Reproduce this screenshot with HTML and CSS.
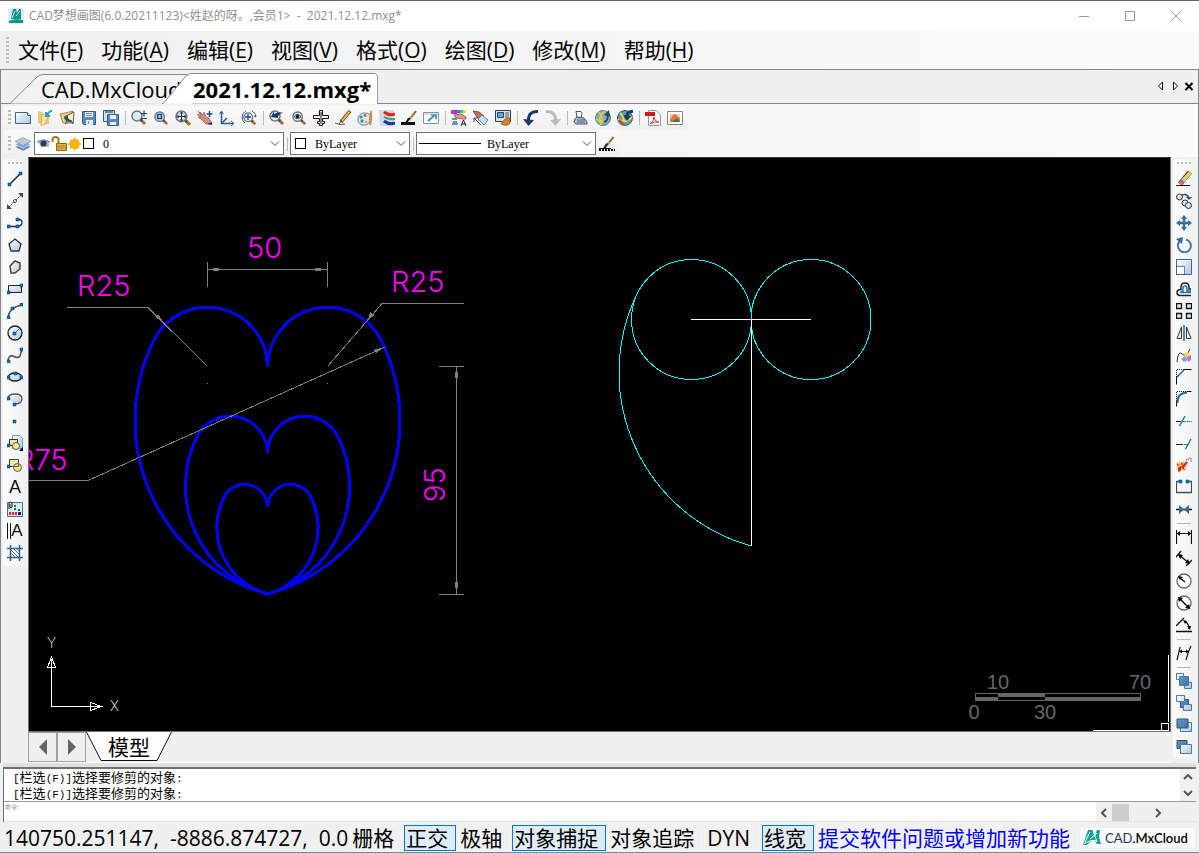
FILE: index.html
```html
<!DOCTYPE html>
<html lang="zh-CN">
<head>
<meta charset="utf-8">
<title>CAD梦想画图</title>
<link rel="stylesheet" href="styles.css">
</head>
<body>
<svg class="defs" aria-hidden="true">
  <defs>
    <linearGradient id="glass" x1="0" y1="0" x2="1" y2="1"><stop offset="0" stop-color="#fff"/><stop offset="1" stop-color="#a9c6de"/></linearGradient>
    <linearGradient id="steel" x1="0" y1="0" x2="1" y2="1"><stop offset="0" stop-color="#6b9ac6"/><stop offset="1" stop-color="#3f6fa3"/></linearGradient>
    <symbol id="lens" viewBox="0 0 16 16"><path d="M10 10l4 4" stroke="#b0692a" stroke-width="3"/><path d="M9.500 9.500l1.500 1.500" stroke="#444" stroke-width="2.500"/><circle cx="6" cy="6" r="5" fill="#dcebf5" stroke="#6d7580" stroke-width="1.500"/></symbol>
    <symbol id="brush" viewBox="0 0 16 16"><path d="M15 1L9.500 8" stroke="#a45f2b" stroke-width="2"/><path d="M10.500 6.500L8 10" stroke="#aaa" stroke-width="3"/><path d="M9.500 8L6 13.500 4 13l3-5z" fill="#151515"/></symbol>
    <symbol id="mark" viewBox="0 0 18 16"><path fill="#12a594" d="M5 0h5l1 7 3-7h3l-1 7 2 7h-4l-3-4-4 2-3 3H0z"/><path d="M2 12l5-10M7 9l7-6M1 14Q8 9 14 11M10 0l4 12" stroke="#fff" fill="none"/></symbol>
  </defs>
</svg>
<div class="app">
  <header class="titlebar">
    <svg class="logo" viewBox="0 0 16 16"><rect width="16" height="16" rx="2" fill="#dceceb"/><path fill="#07978a" d="M5 1h3l1 4 2-4h2v10H3zM1 13c5-2 8-2 14-1v3H1z"/><path d="M4 10l3-7M8 8l4-5" stroke="#c9e8e3" fill="none"/></svg>
    <h1>CAD梦想画图(6.0.20211123)&lt;姓赵的呀。,会员1&gt;&nbsp; -&nbsp; 2021.12.12.mxg*</h1>
    <div class="winbtns">
      <button aria-label="最小化"><svg viewBox="0 0 12 12"><path d="M1 6.500h10"/></svg></button>
      <button aria-label="最大化"><svg viewBox="0 0 12 12"><path d="M1.500 1.500h9v9h-9z"/></svg></button>
      <button aria-label="关闭"><svg viewBox="0 0 12 12"><path d="M1 1l10 10M11 1L1 11"/></svg></button>
    </div>
  </header>
  <nav class="menubar">
    <span class="grip"></span>
    <button>文件(<u>F</u>)</button><button>功能(<u>A</u>)</button><button>编辑(<u>E</u>)</button><button>视图(<u>V</u>)</button><button>格式(<u>O</u>)</button><button>绘图(<u>D</u>)</button><button>修改(<u>M</u>)</button><button>帮助(<u>H</u>)</button>
  </nav>
  <div class="tabs">
    <button class="tab"><svg viewBox="0 0 184 31" preserveAspectRatio="none"><path d="M0 30.500L27 4Q30 1.500 33 1.500H176L183 5V31" fill="#f2f2f2"/></svg><span>CAD.MxCloud</span></button>
    <button class="tab active"><svg viewBox="0 0 218 31" preserveAspectRatio="none"><path d="M0 30.500H1Q4 28 6 25L24 3Q27 .5 30 .5H215L217.500 3V31" fill="#fff"/></svg><span>2021.12.12.mxg*</span></button>
    <div class="tabnav">
      <button aria-label="上一个"><svg viewBox="0 0 12 12"><path d="M7.500 2v8l-4-4z" fill="#fff"/></svg></button>
      <button aria-label="下一个"><svg viewBox="0 0 12 12"><path d="M4.500 2v8l4-4z" fill="#fff"/></svg></button>
      <button aria-label="关闭"><svg viewBox="0 0 12 12"><path d="M2.500 3l7 7M9.500 3l-7 7" stroke-width="2"/></svg></button>
    </div>
  </div>

  <div class="bars">
    <div class="toolbar">
      <span class="grip"></span>
      <button aria-label="新建"><svg viewBox="0 0 16 16"><path d="M.5 2.500h12l3 3v8H.5z" fill="url(#glass)" stroke="#42657f"/><path d="M12.500 2.500v3h3" fill="#fff" stroke="#42657f"/></svg></button>
      <button aria-label="打开"><svg viewBox="0 0 16 16"><path d="M1 1l4 1 1 2h6v10l-6 1-5-2z" fill="#e9c877"/><path d="M5 4l7 1-4 9-4 2z" fill="#f6e0a0" stroke="#c99f49" stroke-width=".6"/><path d="M15 1q-3 0-5 4M9 2v4h4" stroke="#2e9ad2" stroke-width="2" fill="none"/></svg></button>
      <button aria-label="打开云图"><svg viewBox="0 0 16 16"><path d="M1 4l5-1 8-2-2 3 2 9H4z" fill="#edd27e" stroke="#92713a" stroke-width=".8"/><path d="M15 2L5 7l4 2-3 5 6-4 2 4z" fill="#fff3bd" stroke="#5b5a4c"/><path d="M5 8l4-3v3l5 5-7-2z" fill="#2f4e75"/></svg></button>
      <button aria-label="保存"><svg viewBox="0 0 16 16"><path d="M1.500 1.500h13v13h-12l-1-1z" fill="#5c89b9" stroke="#355d8b"/><path d="M4 2h8v5H4zM5 10h7v5H5z" fill="#e3edf5"/><path d="M5 3.500h6M5 5.500h6M7.500 11v3" stroke="#6d8eae"/></svg></button>
      <button aria-label="全部保存"><svg viewBox="0 0 16 16"><path d="M.5.5h11v11H.5z" fill="#d4e2ef" stroke="#355d8b"/><path d="M2 2h8" stroke="#5c89b9" stroke-width="2"/><path d="M4.500 4.500h11v11h-11z" fill="#5c89b9" stroke="#355d8b"/><path d="M7 5h6v4H7zM7 12h6v3H7z" fill="#e9f1f7"/></svg></button>
      <i class="sep"></i>
      <button aria-label="实时缩放"><svg viewBox="0 0 16 16"><use href="#lens" width="16" height="16"/><path d="M10 3.500h6M13 .5v6M10 8.500h6" stroke="#24415f" stroke-width="1.200"/></svg></button>
      <button aria-label="窗口缩放"><svg viewBox="0 0 16 16"><use href="#lens" x="1" y="1" width="15" height="15"/><path d="M4.500 4.500h4v4h-4z" fill="#b9d4ea" stroke="#164c80" stroke-width="1.500"/></svg></button>
      <button aria-label="范围缩放"><svg viewBox="0 0 16 16"><use href="#lens" width="17" height="17"/><path d="M2.500 6.500h8M6.500 2.500v8" stroke="#153047"/><path d="M1.500 6.500l2-2v4zM11.500 6.500l-2-2v4zM6.500 1.500l-2 2h4zM6.500 11.500l-2-2h4z" fill="#153047"/></svg></button>
      <button aria-label="平移"><svg viewBox="0 0 16 16"><path d="M1 1l4 4L3 2l3 3 1-3 2 5 3 1 3 6H9L4 9 1 7l3 .5L0 4l4 2z" fill="#d08a80" stroke="#a6655b" stroke-width=".8"/><path d="M10 14l5-2v3z" fill="#203a60"/><path d="M9.500 4h6M12.500 1v6" stroke="#214a77" stroke-width="1.500"/></svg></button>
      <button aria-label="坐标"><svg viewBox="0 0 16 16"><path d="M2.500 2v11.500H14M2.500 13.500L8 8" stroke="#2b618d" fill="none" stroke-width="1.500"/><path d="M.5 4l2-3 2 3M12 11l3 2.500-3 2.500" stroke="#2b618d" fill="none"/></svg></button>
      <button aria-label="重生成"><svg viewBox="0 0 16 16"><use href="#lens" x="2" y="2" width="14" height="14"/><path d="M7 4v6M4 7h6" stroke="#27527e" stroke-width="1.300"/><path d="M5 1Q1 3 1 7q0 4 3 6M11 1q4 2 4 6l-2-1" fill="none" stroke="#315e89"/></svg></button>
      <i class="sep"></i>
      <button aria-label="缩放上一个"><svg viewBox="0 0 16 16"><use href="#lens" width="16" height="16"/><path d="M2 7l3-6v3q5-3 9-1-3 0-5 3v2z" fill="#1d3964"/></svg></button>
      <button aria-label="动态观察"><svg viewBox="0 0 16 16"><use href="#lens" x="1" y="1" width="15" height="15"/><path d="M3 6.500q3.500-4 7 0-3.500 4-7 0" fill="#fff" stroke="#333"/><circle cx="6.500" cy="6.500" r="1.700" fill="#111"/></svg></button>
      <button aria-label="测量"><svg viewBox="0 0 16 16"><path d="M6.500.5h3v5h6v3h-6v3h2v2h-2v2h-3v-2h-2v-2h2v-3h-6v-3h6z" fill="#fff" stroke="#111"/><path d="M8 2v12" stroke="#111"/></svg></button>
      <button aria-label="画笔"><svg viewBox="0 0 16 16"><path d="M15 1L6 12" stroke="#5c3c1e" stroke-width="3.500"/><path d="M14.500 1.500L7 11" stroke="#f2c34e" stroke-width="2"/><path d="M7 10l-3 4M0 13l5 1.500 5-.5" stroke="#555" fill="none"/></svg></button>
      <button aria-label="颜色"><svg viewBox="0 0 16 16"><path d="M1 8q1-5 7-5 6 0 5 4-1 2 0 4-2 5-8 4-5-2-4-7z" fill="#d9e9f1" stroke="#61899d"/><circle cx="4" cy="7" r="1.500" fill="#369c5b"/><circle cx="8" cy="5.500" r="1.500" fill="#e8503a"/><circle cx="5" cy="11" r="1.700" fill="#3e87c9"/><circle cx="9" cy="12" r="1.300" fill="#e7b72e"/><path d="M14 1v10l-1 4" stroke="#e38830" stroke-width="2"/></svg></button>
      <button aria-label="图层颜色"><svg viewBox="0 0 16 16"><path d="M0 0h15v16H1z" fill="#cfd8e5"/><path d="M5 2q5 4 11 2" stroke="#ee1b24" stroke-width="3" fill="none"/><path d="M5 7q5 3 11 2" stroke="#29a94c" stroke-width="2" fill="none"/><path d="M5 11q5 4 11 2" stroke="#242eae" stroke-width="3" fill="none"/></svg></button>
      <button aria-label="线宽"><svg viewBox="0 0 16 16"><use href="#brush" width="16" height="16"/><path d="M0 13.500h14" stroke="#111" stroke-width="3"/></svg></button>
      <button aria-label="全屏"><svg viewBox="0 0 16 16"><path d="M.5 2.500h15v11H.5z" fill="#fff" stroke="#8a9199"/><path d="M1 4h14" stroke="#dbe1e6" stroke-width="2"/><path d="M5 11l7-6M8 5h5v4" fill="none" stroke="#2995d2" stroke-width="1.700"/></svg></button>
      <i class="sep"></i>
      <button aria-label="特性"><svg viewBox="0 0 16 16"><path d="M0 0h3v4H0z" fill="#ef26a8"/><path d="M3 0h3v4H3z" fill="#9e39df"/><path d="M6 0h3v3H6z" fill="#267fe8"/><path d="M9 0h3v3H9z" fill="#25cf77"/><path d="M12 0h3v3h-3z" fill="#f5dc28"/><path d="M3 5l7-1 5 3v2h-4L5 8z" fill="#da9d8d" stroke="#8e5148" stroke-width=".8"/><path d="M1 8h5v2H1zM2 11h4v2H2zM1 13h6v2H1z" fill="#6a8fb8"/><path d="M10 16l2.500-6 2.500 6m-4.500-2h4" stroke="#222" fill="none"/></svg></button>
      <button aria-label="特性匹配"><svg viewBox="0 0 16 16"><path d="M0 1l6 1 5 4-4 4-3-3z" fill="#b7776d" stroke="#805149"/><path d="M9 5l6 5-4 5-6-6z" fill="#cae0ee" stroke="#5e829c"/><path d="M1 8l7 7M1 12V8h4" stroke="#444" fill="none"/></svg></button>
      <button aria-label="绘图设置"><svg viewBox="0 0 16 16"><path d="M.5.5h15v11H.5z" fill="#d9e1e7" stroke="#303c48"/><path d="M2.500 2.500h6v5h-6z" fill="#6e9fd2" stroke="#1f4776"/><path d="M10 3h4M10 5h4M10 7h4" stroke="#53616e"/><path d="M15 8l-5 1-4 5q7 3 9-1z" fill="#d98321" stroke="#88511b" stroke-width=".7"/></svg></button>
      <i class="sep"></i>
      <button aria-label="撤销"><svg viewBox="0 0 16 16"><path d="M15 1.500Q5 1 5.500 11" fill="none" stroke="#1c3b6c" stroke-width="3"/><path d="M0 9l5.500 7L11 10z" fill="#1c3b6c"/></svg></button>
      <button aria-label="重做"><svg viewBox="0 0 16 16"><path d="M1 1.500q10-.5 9.500 9.500" fill="none" stroke="#b9bbbd" stroke-width="3"/><path d="M16 9l-5.500 7L5 10z" fill="#b9bbbd"/></svg></button>
      <i class="sep"></i>
      <button aria-label="打印"><svg viewBox="0 0 16 16"><path d="M3 1.500h5l1 2-1 4H4z" fill="#fff" stroke="#43546b"/><path d="M2 9l2-2 7 1 3 4v2H3l-2-2z" fill="#b4c1d2" stroke="#3e5069"/><path d="M4 10h8M4 12h8" stroke="#47627f"/></svg></button>
      <button aria-label="上传云图"><svg viewBox="0 0 16 16"><circle cx="8" cy="8" r="7.500" fill="#7cacbf" stroke="#5c7b8d"/><path d="M1 9q7 5 14-3M4 2q5 7 2 12M10 1q-8 6-4 14" stroke="#e8c447" fill="none" stroke-width="1.700"/><path d="M9 5l5-5 1 7z" fill="#1d4779"/><path d="M9 12q4-1 4-7" stroke="#1d4779" fill="none" stroke-width="2"/></svg></button>
      <button aria-label="下载云图"><svg viewBox="0 0 16 16"><circle cx="8" cy="8" r="7.500" fill="#5e9ab2" stroke="#365b70"/><path d="M1 9q7 5 14-2M3 3q5 4 3 11" stroke="#f0d34d" fill="none" stroke-width="2"/><path d="M2 10l5 4" stroke="#d6442d" stroke-width="2"/><path d="M16 1.500Q10 1 10 6" stroke="#173965" fill="none" stroke-width="3"/><path d="M6 5l4 6 4-5z" fill="#173965"/></svg></button>
      <i class="sep"></i>
      <button aria-label="输出PDF"><svg viewBox="0 0 16 16"><path d="M3.500.5h8l4 4v11h-12z" fill="#fff" stroke="#999"/><path d="M0 2h10v4H0z" fill="#d61921"/><path d="M5 14q4-3 4-7 1 5 5 5-5-1-9 2" stroke="#df2933" fill="none"/></svg></button>
      <button aria-label="输出图片"><svg viewBox="0 0 16 16"><path d="M.5 1.500h15v13H.5z" fill="#fff" stroke="#888"/><path d="M3 4h10v8H3z" fill="#f5c69a"/><path d="M3 9l4-5h6v8H3z" fill="#df7448"/><path d="M8 4h5v4z" fill="#f4dfae"/><path d="M5 12l5-4 3 4z" fill="#48782f"/></svg></button>
    </div>
    <div class="toolbar second">
      <span class="grip"></span>
      <button aria-label="图层管理"><svg viewBox="0 0 16 16"><path d="M0 11l8-4 8 4-8 4z" fill="#527fae" stroke="#fff" stroke-width=".5"/><path d="M0 8.500l8-4 8 4-8 4z" fill="#88a9c9" stroke="#fff" stroke-width=".5"/><path d="M0 5.500l8-4 8 4-8 4z" fill="#b7cbdd" stroke="#5480a7" stroke-width=".5"/></svg></button>
      <div class="combo layer">
        <span class="comboicons">
          <svg viewBox="0 0 13 14"><path d="M1 5q6-5 11 0v5H4z" fill="#a9b7c4"/><circle cx="6.500" cy="6.500" r="3" fill="#263e5a"/><path d="M0 5q6-4 13 0" stroke="#5e6d7c" fill="none"/></svg>
          <svg class="lock" viewBox="0 0 16 15"><path d="M1.500 6V3.500Q2 1 4.500 1 7.500 1 7.500 4v4" fill="none" stroke="#a87c1c" stroke-width="2"/><path d="M5.500 7.500h10v7h-10z" fill="#e5b646" stroke="#8b681a"/><path d="M6 10h9M6 12h9" stroke="#a88228"/></svg>
          <svg viewBox="0 0 13 13"><path d="M6.500 0v13M0 6.500h13M2 2l9 9M11 2l-9 9" stroke="#f6b500" stroke-width="1.500"/><circle cx="6.500" cy="6.500" r="4.500" fill="#ffb900" stroke="#f79b00"/></svg>
          <i class="swatch"></i>
        </span>
        <select aria-label="图层"><option>0</option></select>
        <svg class="chev" viewBox="0 0 10 6"><path d="M1 .5l4 4 4-4"/></svg>
      </div>
      <i class="sep"></i>
      <div class="combo color">
        <span class="comboicons"><i class="swatch"></i></span>
        <select aria-label="颜色"><option>ByLayer</option></select>
        <svg class="chev" viewBox="0 0 10 6"><path d="M1 .5l4 4 4-4"/></svg>
      </div>
      <i class="sep"></i>
      <div class="combo line">
        <span class="comboicons"><i class="rule"></i></span>
        <select aria-label="线型"><option>ByLayer</option></select>
        <svg class="chev" viewBox="0 0 10 6"><path d="M1 .5l4 4 4-4"/></svg>
      </div>
      <button aria-label="线型管理"><svg viewBox="0 0 16 16"><use href="#brush" width="16" height="15"/><path d="M0 12.500h12" stroke="#111"/><path d="M0 14h16" stroke="#111" stroke-width="2" stroke-dasharray="2 1"/></svg></button>
    </div>
  </div>

  <main class="work">
    <div class="side left">
      <span class="hgrip"></span>
      <button aria-label="直线"><svg viewBox="0 0 16 16"><path d="M3 13L13 3" stroke="#222" stroke-width="1.500"/><path class="n" d="M1 12h3v3H1zM12 1h3v3h-3z"/></svg></button>
      <button aria-label="构造线"><svg viewBox="0 0 16 16"><path d="M2 14L14 2" stroke="#444" stroke-dasharray="2 1"/><path d="M0 16v-5l5 5zM11 0h5v5z" fill="#444"/><circle cx="8" cy="8" r="1.500" fill="#fff" stroke="#444"/></svg></button>
      <button aria-label="多段线"><svg viewBox="0 0 16 16"><path d="M2 11.500h9M10 4.500h2q3 0 3 3t-4 4" fill="none" stroke="#333" stroke-width="1.300"/><path class="n" d="M0 10h3v3H0zM9 10h3v3H9zM9 3h3v3H9z"/></svg></button>
      <button aria-label="正多边形"><svg viewBox="0 0 16 16"><path d="M8 2l6 5-2 7H4L2 7z" fill="url(#glass)" stroke="#333" stroke-width="1.300"/></svg></button>
      <button aria-label="多边形"><svg viewBox="0 0 16 16"><path d="M8 2l5 2v6l-5 4H4L3 7z" fill="url(#glass)" stroke="#444" stroke-width="1.500"/></svg></button>
      <button aria-label="矩形"><svg viewBox="0 0 16 16"><path d="M1.500 4.500h13v7h-13z" fill="url(#glass)" stroke="#222"/><path class="n" d="M0 10h3v3H0zM13 3h3v3h-3z"/></svg></button>
      <button aria-label="圆弧"><svg viewBox="0 0 16 16"><path d="M1 15Q2 4 15 2" fill="none" stroke="#555" stroke-width="1.500"/><path class="n" d="M0 13h3v3H0zM4 4h3v3H4zM13 0h3v3h-3z"/></svg></button>
      <button aria-label="圆"><svg viewBox="0 0 16 16"><circle cx="8" cy="8" r="7" fill="url(#glass)" stroke="#222" stroke-width="1.300"/><path d="M8 8l5-5" stroke="#2476ba"/><path class="n" d="M6 7h3v3H6z"/></svg></button>
      <button aria-label="样条曲线"><svg viewBox="0 0 16 16"><path d="M1 15q0-7 5-6 5 3 7 0 1-3 2-7" fill="none" stroke="#555" stroke-width="1.500"/><path class="n" d="M0 13h3v3H0zM13 1h3v3h-3z"/></svg></button>
      <button aria-label="椭圆"><svg viewBox="0 0 16 16"><ellipse cx="8" cy="8" rx="6.500" ry="4" fill="url(#glass)" stroke="#222" stroke-width="1.300"/><path class="n" d="M0 7h3v3H0zM13 7h3v3h-3zM7 3h3v3H7z"/></svg></button>
      <button aria-label="椭圆弧"><svg viewBox="0 0 16 16"><path d="M1 8q0-5 7-5t7 5-7 5" fill="url(#glass)" stroke="#555" stroke-width="1.300"/><path class="n" d="M0 6h3v3H0zM6 12h3v3H6z"/></svg></button>
      <button aria-label="点"><svg viewBox="0 0 16 16"><path class="n" d="M6 7h3v3H6z"/></svg></button>
      <button aria-label="插入块"><svg viewBox="0 0 16 16"><path d="M5.500.5h7l3 3v10h-10z" fill="url(#glass)" stroke="#6f98bb"/><path d="M2.500 4.500h8v6h-8z" fill="#f4e79c" stroke="#333"/><circle cx="9" cy="11" r="3.500" fill="#f4e79c" stroke="#555"/><path class="n" d="M0 9h3v3H0z"/><path d="M12 16h4v-4z" fill="#000"/></svg></button>
      <button aria-label="创建块"><svg viewBox="0 0 16 16"><path d="M2.500 2.500h9v7h-9z" fill="#f7ea9e" stroke="#444"/><circle cx="10.500" cy="10.500" r="4" fill="#f4e37f" stroke="#555"/><path d="M7 9.500h4.500V7" fill="none" stroke="#555"/><path class="n" d="M0 8h3v3H0z"/></svg></button>
      <button aria-label="文字" class="glyph">A</button>
      <button aria-label="填充"><svg viewBox="0 0 16 16"><path d="M.5 1.500h15v14H.5z" fill="#dceaf5" stroke="#447199"/><path d="M2 11h2v3H2zM5 11h2v3H5zM8 11h2v3H8z" fill="#ef1e1e"/><path d="M7 4h2v2H7zM7 7h2v2H7zM11 8h2v2h-2z" fill="#187d35"/><path d="M11 11h3v3h-3z" fill="#15267d"/><path d="M2 8V2q1-2 3 0v4q-1 2-2 0V3" fill="none" stroke="#222"/></svg></button>
      <button aria-label="多行文字" class="glyph multi">A</button>
      <button aria-label="图案填充"><svg viewBox="0 0 16 16"><path d="M3.500 0v16M12.500 0v16M0 3.500h16M0 12.500h16" stroke="#2e658f" stroke-width="1.500"/><path d="M4 5l7 7M4 8l4 4M7 4l5 5M10 4l2 2" stroke="#537fa3"/></svg></button>
    </div>

    <div class="center">
      <div class="canvas">
        <svg class="drawing" viewBox="29 158 1141 573" preserveAspectRatio="xMinYMin meet" shape-rendering="crispEdges">
          <g fill="none" stroke="#00f" stroke-width="3">
            <path vector-effect="non-scaling-stroke" d="M267.500 366.500A60 60 0 0 0 154 340A180 180 0 0 0 267.500 594A180 180 0 0 0 381 340A60 60 0 0 0 267.500 366.500"/>
            <path vector-effect="non-scaling-stroke" transform="translate(267.500 594) scale(.62) translate(-267.500 -594)" d="M267.500 366.500A60 60 0 0 0 154 340A180 180 0 0 0 267.500 594A180 180 0 0 0 381 340A60 60 0 0 0 267.500 366.500"/>
            <path vector-effect="non-scaling-stroke" transform="translate(267.500 594) scale(.382) translate(-267.500 -594)" d="M267.500 366.500A60 60 0 0 0 154 340A180 180 0 0 0 267.500 594A180 180 0 0 0 381 340A60 60 0 0 0 267.500 366.500"/>
          </g>
          <g fill="none" stroke="#808080">
            <path d="M207.500 262v25M327.500 262v25M207 269.500h121M67 307.500h81l59.500 59M464 303.500h-82l-54.500 63M29 480.500h59L385 347M439 366.500h25M439 594.500h25M456.500 366v229M207 383.500h1M327 383.500h1"/>
          </g>
          <path d="M213 268h6v3h-6zM315 268h6v3h-6zM455 372h3v6h-3zM455 582h3v6h-3zM155 317l3-3 6 9zM368 320l2-8 5 3zM385 347l-9 6-3-3z" fill="#808080"/>
          <g class="dim">
            <text x="247" y="258">50</text><text x="77" y="296">R25</text><text x="391" y="292">R25</text><text x="16" y="470">R75</text>
            <text transform="translate(445 502) rotate(-90)">95</text>
          </g>
          <g fill="none" stroke="#0ff"><circle cx="691.500" cy="319.500" r="60"/><circle cx="811" cy="319.500" r="60"/><path d="M637.500 293A180 180 0 0 0 751.500 546"/></g>
          <path d="M691 319.500h120M751.500 320v226" stroke="#fff"/>
          <g fill="none" stroke="#fff"><path d="M51.500 668v38.500H91M51.500 657l-4 10.500h8zM51.500 659v8M101.500 706.500l-11-4v8zM91 706.500h10M1168.500 655v67M1161.500 723.500h7v7h-7zM1093 730.500h68"/></g>
          <g class="axis"><text x="47" y="648">Y</text><text x="110" y="711">X</text></g>
          <path d="M975.500 693.500h165v7h-165z" fill="none" stroke="#666"/>
          <path d="M975 697h23v4h-23zM998 693h47v4h-47zM1045 697h96v4h-96z" fill="#666"/>
          <g class="scale"><text x="998" y="689">10</text><text x="1140" y="689">70</text><text x="974" y="719">0</text><text x="1045" y="719">30</text></g>
        </svg>
      </div>
      <div class="sheets">
        <button class="arrow" aria-label="向左"><svg viewBox="0 0 16 16"><path d="M12 0v16L4 8z"/></svg></button>
        <button class="arrow" aria-label="向右"><svg viewBox="0 0 16 16"><path d="M4 0v16l8-8z"/></svg></button>
        <button class="sheet"><svg viewBox="0 0 86 29" preserveAspectRatio="none"><path d="M.5 0L15 28.500H71L85.500 0" fill="#fff" stroke="#111"/></svg><span>模型</span></button>
      </div>
    </div>

    <div class="side right">
      <span class="hgrip"></span>
      <button aria-label="删除"><svg viewBox="0 0 16 16"><path d="M0 14.500h14" stroke="#111"/><path d="M14 1L4 13" stroke="#333" stroke-width="5"/><path d="M14.500 1L8 8.500" stroke="#f0cf4b" stroke-width="3.500"/><path d="M9 7.500l-2 2.300" stroke="#b9d4e6" stroke-width="4"/><path d="M7 9.500L4 13" stroke="#e4685d" stroke-width="4"/></svg></button>
      <button aria-label="复制"><svg viewBox="0 0 16 16"><g fill="url(#glass)" stroke="#333"><circle cx="3.500" cy="4" r="3"/><circle cx="9" cy="10" r="3"/><circle cx="12.500" cy="12.500" r="3"/></g><path d="M6 2q6-2 7 4" fill="none" stroke="#245788" stroke-width="1.700"/><path d="M10 4h6l-3 3z" fill="#245788"/></svg></button>
      <button aria-label="移动"><svg viewBox="0 0 16 16"><path d="M8 2v12M2 8h12" stroke="#346d9f" stroke-width="2.500"/><path d="M8 0L5 4h6zM8 16l-3-4h6zM0 8l4-3v6zM16 8l-4-3v6z" fill="#346d9f"/></svg></button>
      <button aria-label="旋转"><svg viewBox="0 0 16 16"><path d="M4 4A6.500 6.500 0 1 0 10 2.500" fill="none" stroke="#4a779f" stroke-width="2"/><path d="M0 2l7-2-1 7z" fill="#346d9f"/></svg></button>
      <button aria-label="缩放"><svg viewBox="0 0 16 16"><path d="M.5.5h15v15H.5z" fill="url(#glass)" stroke="#326a98"/><path d="M.5 7.500h8v8h-8z" fill="#fff" stroke="#111" stroke-dasharray="1 1"/></svg></button>
      <button aria-label="偏移"><svg viewBox="0 0 16 16"><path d="M15 14.500H4q-3 0-3-3t4-3V6q0-4 4-4t4 4v2h2" fill="none" stroke="#222" stroke-width="1.500"/><path d="M15 11.500H5q-1-1 2-1V7q0-2 2-2t2 2v3h4" fill="none" stroke="#2674bd" stroke-width="1.500"/></svg></button>
      <button aria-label="阵列"><svg viewBox="0 0 16 16"><path d="M.5.500h5v5h-5zM10.500.5h5v5h-5zM.5 10.500h5v5h-5zM10.500 10.500h5v5h-5z" fill="#dbe8f3" stroke="#111" stroke-width="1.300"/></svg></button>
      <button aria-label="镜像"><svg viewBox="0 0 16 16"><path d="M5.500 2v11.500H1zM10.500 2v11.500H15z" fill="#eef4f8" stroke="#333"/><path d="M8 0v16" stroke="#1565ad" stroke-width="1.500"/></svg></button>
      <button aria-label="编辑样条"><svg viewBox="0 0 16 16"><path d="M1 15q1-12 5-8t8-5" fill="none" stroke="#333"/><path d="M10 5l4 2-2 4-4-2z" fill="#f3d744"/><path d="M11 10l4-2v5l-3 2z" fill="#c66bd0"/><path d="M5 12l4-3 3 4-4 2z" fill="#72a5e4"/></svg></button>
      <button aria-label="倒角"><svg viewBox="0 0 16 16"><path d="M.5 15.500V8M8 .5h7.500" stroke="#111"/><path d="M.5 8V.5H8" stroke="#111" stroke-dasharray="1 1" fill="none"/><path d="M1 8l7-7" stroke="#1766af" stroke-width="1.500"/></svg></button>
      <button aria-label="圆角"><svg viewBox="0 0 16 16"><path d="M.5 15.500V10M11 .5h4.500" stroke="#111"/><path d="M.5 10V.5H11" stroke="#111" stroke-dasharray="1 1" fill="none"/><path d="M1.500 12Q1 2 11 1.500" stroke="#1766af" stroke-width="2" fill="none"/></svg></button>
      <button aria-label="修剪"><svg viewBox="0 0 16 16"><path d="M0 8.500h5" stroke="#111"/><path d="M7 8.500h9" stroke="#2877b5" stroke-dasharray="3 1"/><path d="M3.500 13L9 3" stroke="#2877b5" stroke-width="1.500"/></svg></button>
      <button aria-label="延伸"><svg viewBox="0 0 16 16"><path d="M0 9.500h7" stroke="#111"/><path d="M8 9.500h4" stroke="#2877b5"/><path d="M9.500 14L15 4" stroke="#2877b5" stroke-width="1.500"/></svg></button>
      <button aria-label="分解"><svg viewBox="0 0 16 16"><path d="M0 6l2 1 1-3 2 3 3-3v4l3 1-3 2 1 3-3-1-3 3v-4H0l2-2z" fill="#f9b944"/><path d="M1 6l2 2-2 1zM5 5l2 2-2 1zM2 11l3-2v4l-3 2zM7 10l3 3-3-1z" fill="#e51c23"/><path d="M6 11l5-6" stroke="#d72c20" stroke-width="2.500"/><path d="M10 3l5-2v4" stroke="#888" stroke-dasharray="1 1" fill="none" stroke-width="2"/></svg></button>
      <button aria-label="打断"><svg viewBox="0 0 16 16"><path d="M4 2.500H.5v11h15v-11H12" fill="#f8fbfd" stroke="#45515b" stroke-width="1.300"/><path class="n" d="M3 1h3v3H3zM10 1h3v3h-3z"/></svg></button>
      <button aria-label="合并"><svg viewBox="0 0 16 16"><path d="M0 8.500h16" stroke="#111" stroke-width="1.500"/><path d="M3 4l5 4.500L3 13zM13 4L8 8.500l5 4.500z" fill="#39678c"/></svg></button>
      <i class="hsep"></i>
      <button aria-label="线性标注"><svg viewBox="0 0 16 16"><path d="M.5 1v14M15.500 1v14M1 4.500h14" stroke="#111" stroke-width="1.200"/><path d="M1 4.500l3-2.500v5zM15 4.500L12 2v5z" fill="#000"/></svg></button>
      <button aria-label="对齐标注"><svg viewBox="0 0 16 16"><path d="M3 4l10 8M0 6l5-6M10 15l6-6" stroke="#111" stroke-width="1.400"/><path d="M2 3l5 1-3 4zM14 13l-5-1 3-4z" fill="#000"/></svg></button>
      <button aria-label="半径标注"><svg viewBox="0 0 16 16"><circle cx="8" cy="8" r="7" fill="#fff" stroke="#666" stroke-width="1.300"/><path d="M3 4l6 5" stroke="#111" stroke-width="1.500"/><path d="M2 3l5 1-3 3z" fill="#000"/></svg></button>
      <button aria-label="直径标注"><svg viewBox="0 0 16 16"><circle cx="8" cy="8" r="7" fill="#fff" stroke="#666" stroke-width="1.300"/><path d="M3 3l10 10" stroke="#111" stroke-width="1.500"/><path d="M2 2l5 1-4 4zM14 14l-5-1 4-4z" fill="#000"/></svg></button>
      <button aria-label="角度标注"><svg viewBox="0 0 16 16"><path d="M0 14.500h16M0 9l8-8M9 4q4 3 4 8" fill="none" stroke="#111" stroke-width="1.300"/><path d="M7 3l4 1-2 3zM11 9h4l-1 4z" fill="#000"/></svg></button>
      <i class="hsep"></i>
      <button aria-label="编辑标注"><svg viewBox="0 0 16 16"><path d="M1 15Q3 7 4 2M10 15q2-8 5-14M3 6.500h10" fill="none" stroke="#111" stroke-width="1.200"/><path d="M3 6.500l3-2v4zM13 6.500l-3-2v4z" fill="#000"/></svg></button>
      <i class="hsep"></i>
      <button aria-label="前置"><svg viewBox="0 0 16 16"><g fill="url(#glass)" stroke="#477ca7"><path d="M.5.5h7v6h-7zM8.500 9.500h7v6h-7z"/><path d="M3.500 3.500h9v9h-9z" fill="url(#steel)"/></g></svg></button>
      <button aria-label="后置"><svg viewBox="0 0 16 16"><path d="M4.500 4.500h8v8h-8z" fill="url(#steel)" stroke="#28517c"/><path d="M.5.5h8v6h-8zM7.500 9.500h8v6h-8z" fill="url(#glass)" stroke="#477ca7"/></svg></button>
      <button aria-label="置于对象之上"><svg viewBox="0 0 16 16"><path d="M4.500 5.500h11v9h-11z" fill="url(#glass)" stroke="#477ca7"/><path d="M1 2h11v9H1z" fill="url(#steel)" stroke="#28517c"/></svg></button>
      <button aria-label="置于对象之下"><svg viewBox="0 0 16 16"><path d="M1 1.500h10v8H1z" fill="url(#steel)" stroke="#28517c"/><path d="M4.500 5.500h11v9h-11z" fill="url(#glass)" stroke="#477ca7"/></svg></button>
    </div>
  </main>

  <section class="command">
    <div class="log">
      <div><p><span>[</span>栏选<span>(F)]</span>选择要修剪的对象<span>:</span></p><p><span>[</span>栏选<span>(F)]</span>选择要修剪的对象<span>:</span></p></div>
      <div class="vscroll"><button aria-label="向上滚动"><svg viewBox="0 0 10 6"><path d="M1 5l4-4 4 4"/></svg></button><button aria-label="向下滚动"><svg viewBox="0 0 10 6"><path d="M1 1l4 4 4-4"/></svg></button></div>
    </div>
    <div class="prompt">
      <label for="cmd">命令:</label><input id="cmd" type="text">
      <div class="hscroll"><button aria-label="向左滚动"><svg viewBox="0 0 6 10"><path d="M5 1L1 5l4 4"/></svg></button><i></i><button aria-label="向右滚动"><svg viewBox="0 0 6 10"><path d="M1 1l4 4-4 4"/></svg></button></div>
    </div>
  </section>

  <footer class="status">
    <output>140750.251147,&nbsp; -8886.874727,&nbsp; 0.0</output>
    <button>栅格</button><button class="on">正交</button><button>极轴</button><button class="on">对象捕捉</button><button>对象追踪</button><button class="dyn">DYN</button><button class="on">线宽</button>
    <a href="#">提交软件问题或增加新功能</a>
    <div class="brand"><svg viewBox="0 0 18 16"><use href="#mark" width="18" height="16"/></svg><span><b>CAD</b>.MxCloud</span></div>
  </footer>
</div>
</body>
</html>
```
FILE: styles.css
```css
* { box-sizing: border-box; }
body {
  margin: 0;
  background: #f0f0f0;
  color: #000;
  font: 21px/28px "Open Sans", "Noto Sans CJK SC", sans-serif;
}
button { margin: 0; padding: 0; border: 0; background: none; font: inherit; color: inherit; }
.defs { position: absolute; width: 0; height: 0; }
.app { display: flex; flex-direction: column; min-height: 100vh; border-top: 1px solid #6e6560; border-bottom: 1px solid #828790; }

.titlebar { display: flex; align-items: center; height: 30px; padding-left: 8px; gap: 5px; background: #fff; }
.logo { width: 16px; height: 16px; }
.titlebar h1 { flex: 1; margin: 0; color: #8f8f8f; font-size: 12px; font-weight: 400; white-space: nowrap; }
.winbtns { display: flex; }
.winbtns button { width: 46px; height: 28px; display: grid; place-items: center; }
.winbtns svg { width: 12px; height: 12px; fill: none; stroke: #999; }

.menubar { display: flex; align-items: center; height: 38px; padding-left: 6px; gap: 18px; background: linear-gradient(90deg, #f0f0f0, #fbfbfb); }
.menubar .grip { height: 26px; margin-right: -9px; }
.menubar button { white-space: nowrap; }
.menubar u { text-decoration-thickness: 1px; text-underline-offset: 3px; }
.grip { width: 3px; height: 16px; background: repeating-linear-gradient(#bbb 0 2px, transparent 2px 4px); }

.tabs { display: flex; align-items: flex-end; height: 35px; padding: 0 3px 0 9px; border: 1px solid #828790; }
.tab { position: relative; height: 31px; padding: 0 7px 0 31px; margin-bottom: -1px; font-size: 22px; white-space: nowrap; }
.tab svg { position: absolute; inset: 0; width: 100%; height: 100%; stroke: #828790; }
.tab span { position: relative; }
.tab:first-child { width: 184px; text-align: left; }
.tab.active { margin-left: -32px; font-weight: 700; }
.tabnav { display: flex; margin: 0 0 11px auto; gap: 2px; }
.tabnav button { width: 12px; height: 12px; display: grid; }
.tabnav svg { width: 12px; height: 12px; fill: none; stroke: #000; }

.bars { padding: 2px 0 0 3px; border: solid #828790; border-width: 0 1px; background: linear-gradient(90deg, #f0f0f0, #fbfbfb); }
.toolbar { display: flex; align-items: center; width: max-content; height: 24px; padding: 0 2px 0 4px; border-radius: 0 4px 4px 0; background: linear-gradient(#fafafa, #f0f0f0); }
.toolbar .grip { margin-right: 1px; }
.toolbar button, .side button { flex: none; width: 22px; height: 22px; display: grid; place-items: center; }
.toolbar button svg, .side button svg { width: 16px; height: 16px; fill: none; }
.sep { width: 6px; height: 14px; background: linear-gradient(#bbb, #bbb) center / 1px 100% no-repeat; }
.toolbar.second { height: 27px; }
.combo { position: relative; height: 23px; border: 1px solid #707070; background: #fff; display: flex; align-items: center; }
.combo.layer { width: 250px; }
.combo.color { width: 120px; }
.combo.line { width: 180px; }
.combo select { width: 100%; height: 21px; padding: 0; border: 0; background: none; appearance: none; color: #000; font: 12px/16px "Liberation Serif", "Noto Sans CJK SC", serif; }
.combo.layer select { padding-left: 68px; }
.combo.color select { padding-left: 24px; }
.combo.line select { padding-left: 70px; }
.comboicons { position: absolute; left: 2px; display: flex; align-items: center; gap: 1px; pointer-events: none; }
.comboicons svg { width: 13px; height: 14px; }
.comboicons .lock { width: 16px; height: 15px; }
.swatch { width: 11px; height: 11px; border: 1px solid #000; margin-left: 1px; }
.color .swatch { margin-left: 2px; }
.rule { width: 62px; height: 1px; background: #000; }
.chev { position: absolute; right: 3px; width: 10px; height: 6px; fill: none; stroke: #555; pointer-events: none; }

.work { flex: 1; display: grid; grid-template-columns: 27px minmax(0, 1fr) 27px; border: solid #828790; border-width: 0 1px; }
.side { display: flex; flex-direction: column; align-items: center; align-self: start; margin: 2px 0 0 2px; padding: 2px 1px 0 0; border-radius: 4px; background: linear-gradient(90deg, #fcfcfc, #f0f0f0); }
.right { padding-right: 3px; }
.left { padding-bottom: 2px; }
.hgrip { width: 15px; height: 2px; margin: 1px 0 4px; background: repeating-linear-gradient(90deg, #bbb 0 2px, transparent 2px 4px); }
.hsep { width: 14px; height: 6px; background: linear-gradient(#bbb, #bbb) center / 100% 1px no-repeat; }
.n { fill: #0b76c4; stroke: #06395f; stroke-width: .5px; }
.glyph { font: 18px/22px "Liberation Sans", sans-serif; color: #111; }
.side .multi { width: 16px; height: 16px; margin: 3px 0; border-left: 4px double #111; font-size: 17px; line-height: 16px; }

.center { display: flex; flex-direction: column; min-width: 0; }
.canvas { flex: 1; background: #000; border: 1px solid #707070; border-top-color: #333; overflow: hidden; }
.drawing { display: block; width: 100%; height: auto; }
.dim text { fill: #f0f; font: 300 29px Inter, sans-serif; }
.axis text { fill: #fff; font: 200 14px Inter, sans-serif; }
.scale text { fill: #666; font: 20px "Liberation Sans", sans-serif; text-anchor: middle; }
.sheets { display: flex; height: 31px; border-bottom: 1px solid #fff; }
.arrow { width: 29px; height: 30px; display: grid; place-items: center; border: 1px solid #a0a0a0; }
.arrow svg { width: 16px; height: 16px; fill: #666; }
.sheet { position: relative; width: 86px; height: 29px; }
.sheet svg { position: absolute; inset: 0; width: 100%; height: 100%; }
.sheet span { position: relative; }

.command { margin: 4px 3px 0; border-top: 2px solid #707070; border-left: 1px solid #707070; background: #fff; box-shadow: 0 -4px #e0e0e0; }
.log { display: grid; grid-template-columns: 1fr 16px; height: 33px; border-bottom: 1px solid #999; }
.log p { height: 16px; margin: 0; padding-left: 9px; font: 13px/16px "Noto Sans CJK SC", sans-serif; }
.log span { font: 11px/11px "Liberation Mono", monospace; }
.vscroll { display: grid; background: #f0f0f0; }
.vscroll button, .hscroll button { display: grid; place-items: center; }
.vscroll svg { width: 10px; height: 6px; fill: none; stroke: #555; stroke-width: 2; }
.prompt { display: flex; align-items: flex-start; height: 20px; border-bottom: 1px solid #e3e3e3; background: linear-gradient(90deg, #fff 90%, #f0f0f0 90%); }
.prompt label { padding: 0 1px; color: #887; font: 6px/10px "Noto Sans CJK SC", sans-serif; }
.prompt input { flex: 1; min-width: 0; height: 19px; border: 0; padding: 0; background: #fff; outline: 0; font-size: 12px; }
.hscroll { display: flex; align-self: flex-end; width: 100px; height: 17px; background: #f0f0f0; }
.hscroll button { width: 16px; }
.hscroll svg { width: 6px; height: 10px; fill: none; stroke: #555; stroke-width: 2; }
.hscroll i { width: 17px; margin-right: 21px; background: #cdcdcd; }

.status { display: flex; align-items: center; gap: 2px; height: 30px; padding: 2px 4px 0 3px; white-space: nowrap; }
.status output { flex: 1 1 0; min-width: 0; overflow: hidden; padding-left: 1px; }
.status button, .status a { height: 26px; padding: 0 7px 0 1px; border: 1px solid #f4f4f4; line-height: 24px; }
.status .dyn { padding: 0 9px 0 2px; }
.status .on { border-color: #0078d7; background: #dfebf5; }
.status a { color: #00f; text-decoration: none; }
.brand { display: flex; align-items: center; gap: 4px; width: 115px; height: 20px; padding-left: 3px; background: #fafafa; font: 600 13px/18px Lato, sans-serif; }
.brand svg { width: 18px; height: 16px; }
.brand b { color: #25346b; font-weight: 400; }
```
